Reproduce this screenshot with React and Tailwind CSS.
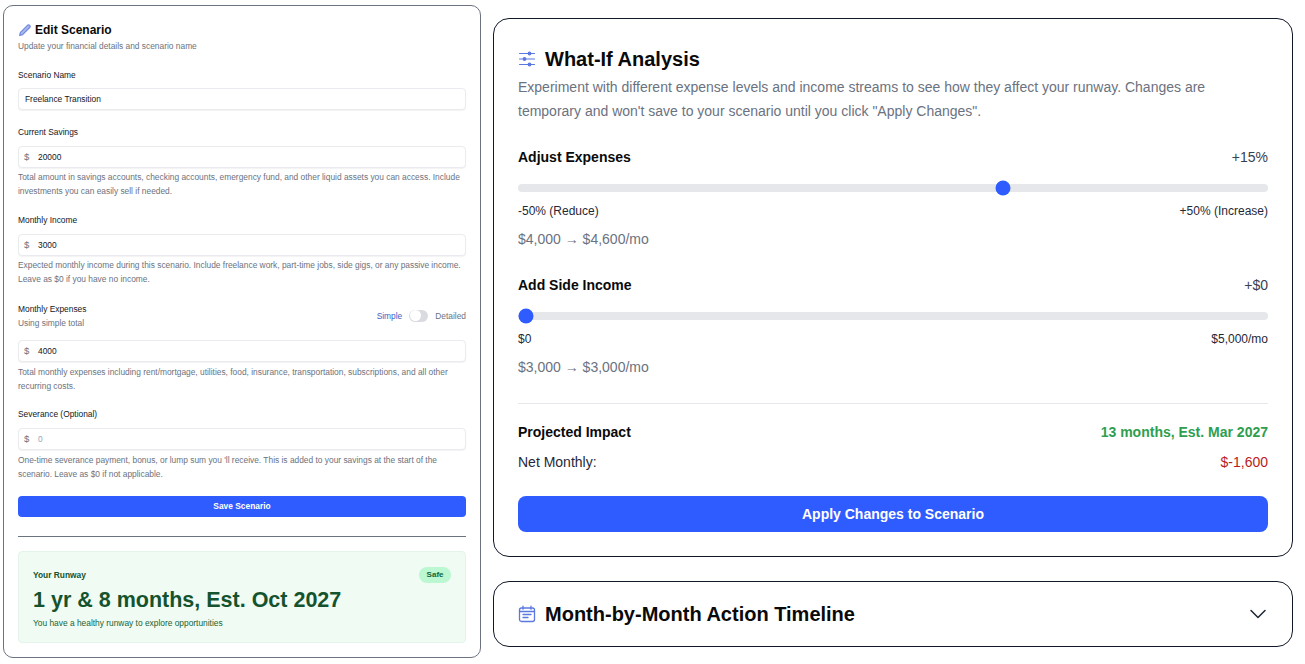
import { ChevronDown } from 'lucide-react';

const inputBox = 'flex items-center w-full h-[22px] bg-white border border-[#e9ebef] rounded-[4px] shadow-[0_1px_1px_rgba(0,0,0,0.05)] text-[8.4px]';

const MoneyField = ({ value, muted }) => (
  <div className={`${inputBox} pl-[5px]`}>
    <span className="w-[14px] text-[#6b7280] text-[9.5px]">$</span>
    <span className={muted ? 'text-[#9ca3af]' : 'text-[#111827]'}>{value}</span>
  </div>
);

const Help = ({ children, gap = 'mt-[2px]' }) => (
  <p className={`${gap} text-[8.4px] leading-[14px] text-[#6b7280]`}>{children}</p>
);

const Label = ({ children }) => (
  <div className="text-[8.4px] leading-[14px] text-[#111827]">{children}</div>
);

const Slider = ({ percent }) => (
  <div className="h-2 px-[7.5px] rounded-full bg-[#e5e7eb]">
    <div className="relative h-full">
      <div
        className="absolute top-1/2 w-[15px] h-[15px] -translate-x-1/2 -translate-y-1/2 rounded-full bg-[#2f5cff]"
        style={{ left: `${percent}%` }}
      />
    </div>
  </div>
);

const Adjuster = ({ title, amount, percent, min, max, change }) => (
  <div>
    <div className="flex justify-between items-center h-5 text-[14px]">
      <span className="font-bold text-[#0a0a0a]">{title}</span>
      <span className="text-[#374151]">{amount}</span>
    </div>
    <div className="mt-[17px]">
      <Slider percent={percent} />
    </div>
    <div className="flex justify-between mt-[10px] text-[12px] leading-[18px] text-[#1f2937]">
      <span>{min}</span>
      <span>{max}</span>
    </div>
    <div className="mt-[9px] text-[14px] leading-5 text-[#6b7280]">{change}</div>
  </div>
);

export default function App() {
  return (
    <div className="flex items-start w-[1305px] h-[664px] bg-white overflow-hidden font-['Liberation_Sans',Arial,sans-serif]">
      <section className="w-[478px] h-[653px] mt-[5px] ml-[3px] px-[14px] pt-[15px] bg-white border border-[#6b7280] rounded-[10px]">
        <div className="flex items-center gap-[4px] h-[18px]">
          <svg className="w-[13px] h-[13px] text-[#6f87e0]" viewBox="0 0 24 24" fill="#aab9ee" stroke="currentColor" strokeWidth="2.2" strokeLinejoin="round">
            <path d="M3 21l1.5-5.5L17.5 2.5a2.8 2.8 0 0 1 4 4L8.5 19.5z" />
          </svg>
          <h2 className="text-[12px] font-bold text-[#0a0a0a]">Edit Scenario</h2>
        </div>
        <p className="text-[8.4px] leading-[14px] text-[#6b7280]">Update your financial details and scenario name</p>

        <div className="mt-[15px]"><Label>Scenario Name</Label></div>
        <div className={`${inputBox} mt-[6px] pl-[6px] text-[#111827]`}>Freelance Transition</div>

        <div className="mt-[15px]"><Label>Current Savings</Label></div>
        <div className="mt-[7px]"><MoneyField value="20000" /></div>
        <Help>Total amount in savings accounts, checking accounts, emergency fund, and other liquid assets you can access. Include investments you can easily sell if needed.</Help>

        <div className="mt-[15px]"><Label>Monthly Income</Label></div>
        <div className="mt-[7px]"><MoneyField value="3000" /></div>
        <Help>Expected monthly income during this scenario. Include freelance work, part-time jobs, side gigs, or any passive income. Leave as $0 if you have no income.</Help>

        <div className="flex justify-between items-center mt-4">
          <div>
            <Label>Monthly Expenses</Label>
            <div className="text-[8.4px] leading-[14px] text-[#6b7280]">Using simple total</div>
          </div>
          <div className="flex items-center gap-[7px] text-[8.4px]">
            <span className="text-[#3b5fc4]">Simple</span>
            <div className="flex items-center w-[19px] h-[12px] rounded-full bg-[#d9dbe0]">
              <div className="w-[11px] h-[11px] ml-[1px] rounded-full bg-white" />
            </div>
            <span className="text-[#6b7280]">Detailed</span>
          </div>
        </div>
        <div className="mt-[10px]"><MoneyField value="4000" /></div>
        <Help gap="mt-[3px]">Total monthly expenses including rent/mortgage, utilities, food, insurance, transportation, subscriptions, and all other recurring costs.</Help>

        <div className="mt-[14px]"><Label>Severance (Optional)</Label></div>
        <div className="mt-[7px]"><MoneyField value="0" muted /></div>
        <Help gap="mt-[3px]">One-time severance payment, bonus, or lump sum you 'll receive. This is added to your savings at the start of the scenario. Leave as $0 if not applicable.</Help>

        <button className="block w-full h-[21px] mt-[15px] rounded-[4px] bg-[#2f5cff] text-[8.4px] font-bold text-white">Save Scenario</button>
        <div className="mt-[19px] border-t border-[#6b7280]" />

        <div className="mt-[14px] h-[92px] px-[14px] pt-[15px] rounded-[4px] border border-[#e3f5ea] bg-[#f0fbf4]">
          <div className="flex justify-between items-center h-4">
            <span className="text-[8.4px] font-bold text-[#14532d]">Your Runway</span>
            <span className="px-[7.5px] h-4 leading-4 rounded-full bg-[#bbf7d0] text-[8px] font-bold text-[#166534]">Safe</span>
          </div>
          <div className="mt-[3px] text-[21.5px] leading-[28px] font-bold text-[#14532d]">1 yr &amp; 8 months, Est. Oct 2027</div>
          <div className="mt-[2px] text-[8.4px] leading-[14px] text-[#166534]">You have a healthy runway to explore opportunities</div>
        </div>
      </section>

      <div className="flex flex-col gap-6 w-[800px] ml-3 mt-[18px]">
        <section className="h-[539px] px-6 pt-[26px] bg-white border border-[#111827] rounded-[16px]">
          <div className="flex items-center gap-[9px] h-7">
            <svg className="w-[18px] h-[18px] text-[#5b78e0]" viewBox="0 0 18 18" fill="none" stroke="currentColor" strokeWidth="1.2" strokeLinecap="round">
              <path d="M1.5 3.5h15M1.5 9h15M1.5 14.5h15" />
              <circle cx="11.5" cy="3.5" r="1.3" fill="currentColor" />
              <circle cx="6.5" cy="9" r="1.3" fill="currentColor" />
              <circle cx="11.5" cy="14.5" r="1.3" fill="currentColor" />
            </svg>
            <h2 className="text-[20px] font-bold text-[#0a0a0a]">What-If Analysis</h2>
          </div>
          <p className="mt-[2px] text-[14px] leading-6 text-[#6b7280]">Experiment with different expense levels and income streams to see how they affect your runway. Changes are temporary and won't save to your scenario until you click "Apply Changes".</p>

          <div className="mt-[24px]">
            <Adjuster title="Adjust Expenses" amount="+15%" percent={65} min="-50% (Reduce)" max="+50% (Increase)" change="$4,000 → $4,600/mo" />
          </div>
          <div className="mt-[26px]">
            <Adjuster title="Add Side Income" amount="+$0" percent={0} min="$0" max="$5,000/mo" change="$3,000 → $3,000/mo" />
          </div>

          <div className="mt-[26px] border-t border-[#e5e7eb]" />
          <div className="flex justify-between items-center h-5 mt-[18px] text-[14px] font-bold">
            <span className="text-[#0a0a0a]">Projected Impact</span>
            <span className="text-[#2e9e4f]">13 months, Est. Mar 2027</span>
          </div>
          <div className="flex justify-between items-center h-5 mt-[10px] text-[14px]">
            <span className="text-[#1f2937]">Net Monthly:</span>
            <span className="text-[#b91c1c]">$-1,600</span>
          </div>
          <button className="block w-full h-9 mt-6 rounded-[8px] bg-[#2f5cff] text-[14px] font-bold text-white">Apply Changes to Scenario</button>
        </section>

        <section className="flex items-center justify-between h-[66px] pl-6 pr-5 bg-white border border-[#111827] rounded-[16px]">
          <div className="flex items-center gap-[9px]">
            <svg className="w-[18px] h-[18px] text-[#5b78e0]" viewBox="0 0 18 18" fill="none" stroke="currentColor" strokeWidth="1.3" strokeLinecap="round">
              <rect x="1.5" y="3" width="15" height="13.5" rx="2" />
              <path d="M5 1.2v3M13 1.2v3M1.5 6.5h15M5 9.5h8M5 12.5h5" />
            </svg>
            <h2 className="text-[20px] font-bold text-[#0a0a0a]">Month-by-Month Action Timeline</h2>
          </div>
          <ChevronDown className="w-7 h-7 text-[#1f2937]" strokeWidth={1.3} />
        </section>
      </div>
    </div>
  );
}
